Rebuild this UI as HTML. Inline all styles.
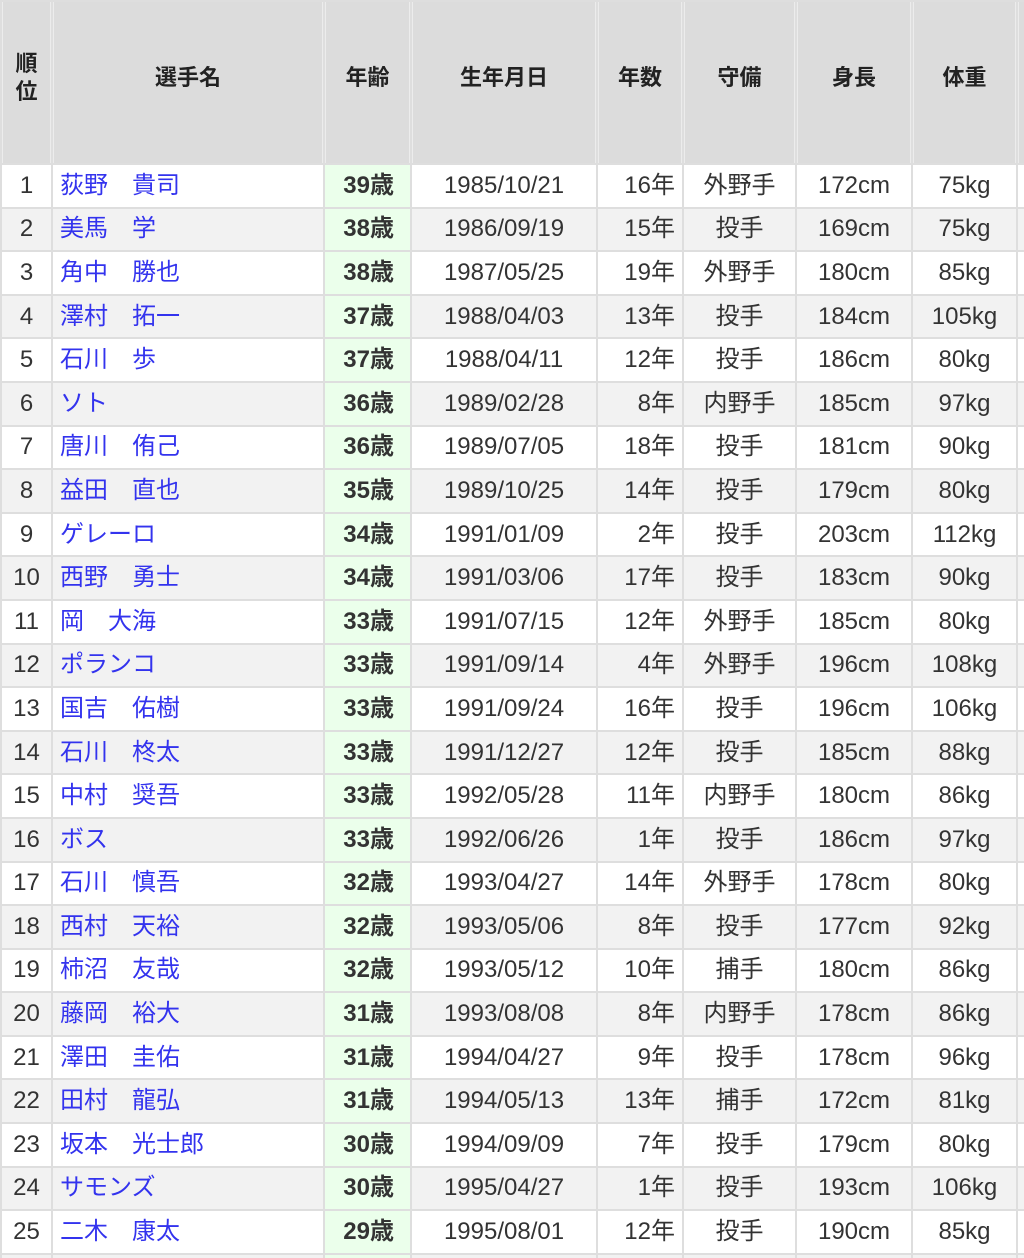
<!DOCTYPE html>
<html><head><meta charset="utf-8"><style>
html,body{margin:0;padding:0;width:1024px;height:1258px;overflow:hidden;background:#fff}
table{border-collapse:separate;border-spacing:2px;background:#dedede;table-layout:fixed;width:1120px;margin:0;font-family:"Liberation Sans","Noto Sans CJK JP",sans-serif;font-size:24px;color:#333}
th{background:#dcdcdc;height:151px;padding:0 0 10px 0;font-weight:bold;font-size:22px;color:#222;text-align:center;line-height:28px;vertical-align:middle;box-shadow:inset 1px 0 0 #ececec,inset -1px 0 0 #ececec}
td{height:41.6px;padding:0;text-align:center;background:#fff;white-space:nowrap;line-height:28px;vertical-align:middle;overflow:hidden}
tr:nth-child(odd) td{background:#f2f2f2}
td:nth-child(2){text-align:left;padding-left:7px;color:#3333ee}
td:nth-child(3){background:#ebffeb!important;font-weight:bold;text-align:right;padding-right:16px}
td:nth-child(5){text-align:right;padding-right:7px}
</style></head><body>
<table>
<colgroup><col style="width:49px"><col style="width:270px"><col style="width:85px"><col style="width:184px"><col style="width:84px"><col style="width:111px"><col style="width:114px"><col style="width:103px"><col style="width:100px"></colgroup>
<tr><th>順<br>位</th><th>選手名</th><th>年齢</th><th>生年月日</th><th>年数</th><th>守備</th><th>身長</th><th>体重</th><th></th></tr>
<tr><td>1</td><td>荻野　貴司</td><td>39歳</td><td>1985/10/21</td><td>16年</td><td>外野手</td><td>172cm</td><td>75kg</td><td></td></tr>
<tr><td>2</td><td>美馬　学</td><td>38歳</td><td>1986/09/19</td><td>15年</td><td>投手</td><td>169cm</td><td>75kg</td><td></td></tr>
<tr><td>3</td><td>角中　勝也</td><td>38歳</td><td>1987/05/25</td><td>19年</td><td>外野手</td><td>180cm</td><td>85kg</td><td></td></tr>
<tr><td>4</td><td>澤村　拓一</td><td>37歳</td><td>1988/04/03</td><td>13年</td><td>投手</td><td>184cm</td><td>105kg</td><td></td></tr>
<tr><td>5</td><td>石川　歩</td><td>37歳</td><td>1988/04/11</td><td>12年</td><td>投手</td><td>186cm</td><td>80kg</td><td></td></tr>
<tr><td>6</td><td>ソト</td><td>36歳</td><td>1989/02/28</td><td>8年</td><td>内野手</td><td>185cm</td><td>97kg</td><td></td></tr>
<tr><td>7</td><td>唐川　侑己</td><td>36歳</td><td>1989/07/05</td><td>18年</td><td>投手</td><td>181cm</td><td>90kg</td><td></td></tr>
<tr><td>8</td><td>益田　直也</td><td>35歳</td><td>1989/10/25</td><td>14年</td><td>投手</td><td>179cm</td><td>80kg</td><td></td></tr>
<tr><td>9</td><td>ゲレーロ</td><td>34歳</td><td>1991/01/09</td><td>2年</td><td>投手</td><td>203cm</td><td>112kg</td><td></td></tr>
<tr><td>10</td><td>西野　勇士</td><td>34歳</td><td>1991/03/06</td><td>17年</td><td>投手</td><td>183cm</td><td>90kg</td><td></td></tr>
<tr><td>11</td><td>岡　大海</td><td>33歳</td><td>1991/07/15</td><td>12年</td><td>外野手</td><td>185cm</td><td>80kg</td><td></td></tr>
<tr><td>12</td><td>ポランコ</td><td>33歳</td><td>1991/09/14</td><td>4年</td><td>外野手</td><td>196cm</td><td>108kg</td><td></td></tr>
<tr><td>13</td><td>国吉　佑樹</td><td>33歳</td><td>1991/09/24</td><td>16年</td><td>投手</td><td>196cm</td><td>106kg</td><td></td></tr>
<tr><td>14</td><td>石川　柊太</td><td>33歳</td><td>1991/12/27</td><td>12年</td><td>投手</td><td>185cm</td><td>88kg</td><td></td></tr>
<tr><td>15</td><td>中村　奨吾</td><td>33歳</td><td>1992/05/28</td><td>11年</td><td>内野手</td><td>180cm</td><td>86kg</td><td></td></tr>
<tr><td>16</td><td>ボス</td><td>33歳</td><td>1992/06/26</td><td>1年</td><td>投手</td><td>186cm</td><td>97kg</td><td></td></tr>
<tr><td>17</td><td>石川　慎吾</td><td>32歳</td><td>1993/04/27</td><td>14年</td><td>外野手</td><td>178cm</td><td>80kg</td><td></td></tr>
<tr><td>18</td><td>西村　天裕</td><td>32歳</td><td>1993/05/06</td><td>8年</td><td>投手</td><td>177cm</td><td>92kg</td><td></td></tr>
<tr><td>19</td><td>柿沼　友哉</td><td>32歳</td><td>1993/05/12</td><td>10年</td><td>捕手</td><td>180cm</td><td>86kg</td><td></td></tr>
<tr><td>20</td><td>藤岡　裕大</td><td>31歳</td><td>1993/08/08</td><td>8年</td><td>内野手</td><td>178cm</td><td>86kg</td><td></td></tr>
<tr><td>21</td><td>澤田　圭佑</td><td>31歳</td><td>1994/04/27</td><td>9年</td><td>投手</td><td>178cm</td><td>96kg</td><td></td></tr>
<tr><td>22</td><td>田村　龍弘</td><td>31歳</td><td>1994/05/13</td><td>13年</td><td>捕手</td><td>172cm</td><td>81kg</td><td></td></tr>
<tr><td>23</td><td>坂本　光士郎</td><td>30歳</td><td>1994/09/09</td><td>7年</td><td>投手</td><td>179cm</td><td>80kg</td><td></td></tr>
<tr><td>24</td><td>サモンズ</td><td>30歳</td><td>1995/04/27</td><td>1年</td><td>投手</td><td>193cm</td><td>106kg</td><td></td></tr>
<tr><td>25</td><td>二木　康太</td><td>29歳</td><td>1995/08/01</td><td>12年</td><td>投手</td><td>190cm</td><td>85kg</td><td></td></tr>
<tr><td>26</td><td></td><td></td><td></td><td></td><td></td><td></td><td></td><td></td></tr>
</table>
</body></html>
